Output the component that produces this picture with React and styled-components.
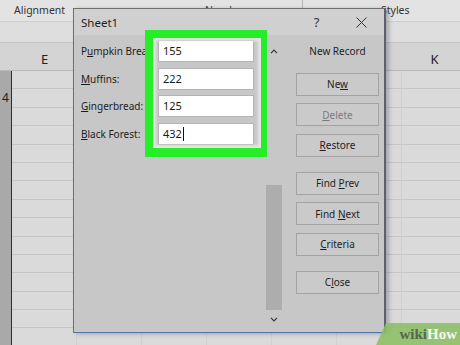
import React from 'react';
import styled, { createGlobalStyle } from 'styled-components';

const Global = createGlobalStyle`
  html, body { margin: 0; padding: 0; }
  body {
    width: 460px; height: 345px; overflow: hidden; background: #d9d9d9;
    font-family: "Noto Sans", "Open Sans", sans-serif;
  }
`;

const Page = styled.div`
  position: relative;
  width: 460px;
  height: 345px;
  overflow: hidden;
  background: #d9d9d9;
`;

/* ---------- spreadsheet background ---------- */
const RibbonLabels = styled.div`
  display: flex;
  height: 22px;
  box-sizing: border-box;
  background: #e3e3e3;
  border-bottom: 1px solid #cdcdcd;
  font-size: 10.5px;
  color: #333;
`;
const GroupLabel = styled.div`
  width: ${p => p.$w}px;
  flex: none;
  box-sizing: border-box;
  padding-left: ${p => p.$pad}px;
  line-height: 20px;
  white-space: nowrap;
  border-right: ${p => (p.$sep ? '1px solid #b5b5b5' : 'none')};
`;
const FormulaBand = styled.div`
  height: 21px;
  box-sizing: border-box;
  background: #dedede;
  border-bottom: 1px solid #c3c3c3;
`;
const ColumnHeader = styled.div`
  display: flex;
  height: 28px;
  box-sizing: border-box;
  background: #d4d4d4;
  border-bottom: 1px solid #b9b9b9;
`;
const Corner = styled.div`
  width: 12px;
  flex: none;
`;
const ColLetter = styled.div`
  width: 65px;
  flex: none;
  display: flex;
  align-items: flex-end;
  justify-content: center;
  padding-bottom: 2px;
  box-sizing: border-box;
  font-size: 13px;
  color: #222;
`;
const Grid = styled.div`
  display: flex;
  flex-direction: column;
`;
const Row = styled.div`
  display: flex;
  height: 18.4px;
  box-sizing: border-box;
`;
const RowHeader = styled.div`
  width: 11px;
  flex: none;
  background: #a9a9a9;
  border-right: 1px solid #2e2e2e;
  font-size: 12px;
  line-height: 18px;
  color: #222;
  text-align: center;
`;
const Cell = styled.div`
  width: 65px;
  flex: none;
  box-sizing: border-box;
  background: #dadada;
  border-bottom: 1px solid #c6c6c6;
  border-right: 1px solid #d0d0d0;
`;

/* ---------- dialog ---------- */
const Dialog = styled.div`
  position: absolute;
  left: 73px;
  top: 8px;
  width: 313px;
  height: 325px;
  box-sizing: border-box;
  display: flex;
  flex-direction: column;
  background: #c7c7c7;
  border: 1px solid #707070;
  border-right: 2px solid #5d6070;
  border-bottom: 1px solid #4f74a8;
  box-shadow: 3px 1px 4px rgba(70, 70, 90, 0.35);
`;
const TitleBar = styled.div`
  height: 26px;
  flex: none;
  display: flex;
  align-items: center;
  padding-left: 7px;
  background: #d0d0d0;
`;
const Title = styled.div`
  flex: 1;
  font-size: 11.5px;
  color: #1e1e1e;
`;
const TitleButton = styled.div`
  width: 45px;
  height: 26px;
  display: flex;
  align-items: center;
  justify-content: center;
  font-size: 13px;
  color: #333;
`;
const Body = styled.div`
  display: flex;
  align-items: flex-start;
  padding: 5px 0 0 7px;
`;
const Fields = styled.div`
  display: flex;
  flex-direction: column;
  gap: 5.7px;
`;
const FieldRow = styled.div`
  display: flex;
  align-items: center;
`;
const Label = styled.div`
  width: 64px;
  margin-right: 13px;
  overflow: hidden;
  white-space: nowrap;
  font-size: 10px;
  color: #1c1c1c;
`;
const Input = styled.div`
  width: 96px;
  height: 22px;
  box-sizing: border-box;
  background: #fff;
  border: 1px solid #b4b4b4;
  padding-left: 4px;
  font-size: 11px;
  line-height: 20px;
  color: #1a1a1a;
  display: flex;
  align-items: center;
`;
const Caret = styled.span`
  display: inline-block;
  width: 1px;
  height: 14px;
  background: #111;
  margin-left: 1px;
`;
const Key = styled.span`
  text-decoration: underline;
  text-underline-offset: 1px;
`;
const ScrollColumn = styled.div`
  width: 16px;
  margin: 4px 0 0 12px;
  display: flex;
  flex-direction: column;
  align-items: center;
`;
const Arrow = styled.div`
  height: ${p => p.$h}px;
  display: flex;
  align-items: center;
  justify-content: center;
`;
const Track = styled.div`
  height: 256px;
  width: 16px;
  display: flex;
  flex-direction: column;
  justify-content: flex-end;
`;
const Thumb = styled.div`
  height: 125px;
  margin-bottom: 4px;
  background: #adadad;
`;
const Buttons = styled.div`
  width: 83px;
  margin: 4px 0 0 14px;
  display: flex;
  flex-direction: column;
`;
const Caption = styled.div`
  height: 14px;
  line-height: 14px;
  text-align: center;
  font-size: 10px;
  color: #1e1e1e;
  margin-bottom: 7px;
`;
const Button = styled.div`
  height: 23px;
  box-sizing: border-box;
  margin-top: ${p => (p.$spaced ? 15 : 7.5)}px;
  background: #cacaca;
  border: 1px solid #a3a3a3;
  display: flex;
  align-items: center;
  justify-content: center;
  font-size: 10px;
  white-space: pre;
  color: ${p => (p.$disabled ? '#7c7c7c' : '#1e1e1e')};
  &:first-of-type { margin-top: 0; }
`;
const Highlight = styled.div`
  position: absolute;
  left: 71px;
  top: 21px;
  width: 122px;
  height: 127px;
  box-sizing: border-box;
  border-style: solid;
  border-color: #25ee28;
  border-width: 8px 6px 9px 8px;
  box-shadow: inset 0 0 3px 3px rgba(238, 240, 238, 0.75);
  pointer-events: none;
`;

/* ---------- watermark ---------- */
const Watermark = styled.div`
  position: absolute;
  right: 0;
  bottom: 0;
  width: 84px;
  height: 22px;
  background: rgba(140, 190, 100, 0.88);
  clip-path: polygon(10px 0, 100% 0, 100% 100%, 0 100%);
  display: flex;
  align-items: center;
  justify-content: flex-end;
  padding-right: 3px;
  box-sizing: border-box;
  font-family: "Liberation Serif", "DejaVu Serif", serif;
  font-weight: bold;
  font-size: 15px;
`;
const Wiki = styled.span`color: #56684c;`;
const How = styled.span`color: #f4f8f0;`;

const Chevron = ({ up }) => (
  <svg width="8" height="5" viewBox="0 0 8 5">
    <path d={up ? 'M1 4.2 L4 1 L7 4.2' : 'M1 0.8 L4 4 L7 0.8'} fill="none" stroke="#333" strokeWidth="1.1" />
  </svg>
);

const CloseIcon = () => (
  <svg width="11" height="11" viewBox="0 0 11 11">
    <path d="M0.5 0.5 L10.5 10.5 M10.5 0.5 L0.5 10.5" stroke="#333" strokeWidth="1" fill="none" />
  </svg>
);

const columns = ['E', 'F', 'G', 'H', 'I', 'J', 'K'];
const rows = Array.from({ length: 15 }, (_, i) => i);

const fields = [
  { label: <>P<Key>u</Key>mpkin Bread:</>, value: '155' },
  { label: <><Key>M</Key>uffins:</>, value: '222' },
  { label: <><Key>G</Key>ingerbread:</>, value: '125' },
  { label: <><Key>B</Key>lack Forest:</>, value: '432', caret: true },
];

export default function App() {
  return (
    <Page>
      <Global />
      <RibbonLabels>
        <GroupLabel $w={160} $pad={14}>Alignment</GroupLabel>
        <GroupLabel $w={143} $pad={45} $sep>Number</GroupLabel>
        <GroupLabel $w={157} $pad={78}>Styles</GroupLabel>
      </RibbonLabels>
      <FormulaBand />
      <ColumnHeader>
        <Corner />
        {columns.map(c => (
          <ColLetter key={c}>{c}</ColLetter>
        ))}
      </ColumnHeader>
      <Grid>
        {rows.map(r => (
          <Row key={r}>
            <RowHeader>{r === 1 ? '4' : ''}</RowHeader>
            {columns.map(c => (
              <Cell key={c} />
            ))}
          </Row>
        ))}
      </Grid>

      <Dialog>
        <TitleBar>
          <Title>Sheet1</Title>
          <TitleButton>?</TitleButton>
          <TitleButton><CloseIcon /></TitleButton>
        </TitleBar>
        <Body>
          <Fields>
            {fields.map((f, i) => (
              <FieldRow key={i}>
                <Label>{f.label}</Label>
                <Input>
                  {f.value}
                  {f.caret && <Caret />}
                </Input>
              </FieldRow>
            ))}
          </Fields>
          <ScrollColumn>
            <Arrow $h={14}><Chevron up /></Arrow>
            <Track><Thumb /></Track>
            <Arrow $h={10}><Chevron /></Arrow>
          </ScrollColumn>
          <Buttons>
            <Caption>New Record</Caption>
            <Button><span>Ne<Key>w</Key></span></Button>
            <Button $disabled><span><Key>D</Key>elete</span></Button>
            <Button><span><Key>R</Key>estore</span></Button>
            <Button $spaced><span>Find <Key>P</Key>rev</span></Button>
            <Button><span>Find <Key>N</Key>ext</span></Button>
            <Button><span><Key>C</Key>riteria</span></Button>
            <Button $spaced><span>C<Key>l</Key>ose</span></Button>
          </Buttons>
        </Body>
        <Highlight />
      </Dialog>

      <Watermark>
        <Wiki>wiki</Wiki>
        <How>How</How>
      </Watermark>
    </Page>
  );
}
